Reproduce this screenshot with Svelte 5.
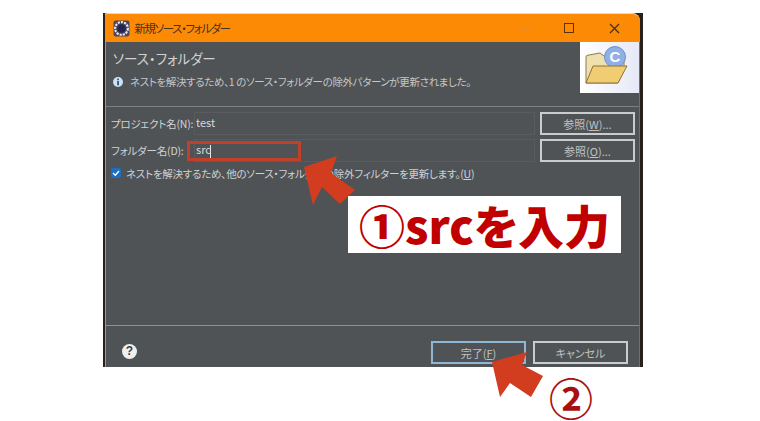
<script>
	const arrows = [
		'304,167 337,156 331,173 355,190 340,204 322,187 313,205',
		'492,362 527,352 522,365 543,376 531,397 510,383 500,397'
	];
</script>

<div class="page">
	<div class="frame">
		<div class="dialog">
			<div class="titlebar">
				<svg class="app-icon" viewBox="0 0 16 16" width="17" height="17">
					<rect x="0.5" y="0.5" width="15" height="15" rx="2" fill="#4a4560" />
					<circle cx="8" cy="8" r="6" fill="none" stroke="#e8e6ee" stroke-width="2" stroke-dasharray="2 1" />
					<circle cx="8" cy="8" r="4" fill="#23264a" />
				</svg>
				<span class="title">新規ソース・フォルダー</span>
				<div class="controls">
					<span class="min"></span>
					<span class="max"></span>
					<svg viewBox="0 0 11 11" width="11" height="11">
						<path d="M1 1 L10 10 M10 1 L1 10" stroke="#4a2c10" stroke-width="1.2" />
					</svg>
				</div>
			</div>

			<div class="header">
				<div class="header-text">
					<h2>ソース・フォルダー</h2>
					<p class="message">
						<svg viewBox="0 0 10 10" width="10" height="10">
							<circle cx="5" cy="5" r="5" fill="#cfe0f2" />
							<rect x="4.2" y="1.6" width="1.7" height="1.5" fill="#1d4f8c" />
							<rect x="4.2" y="3.9" width="1.7" height="4.4" fill="#1d4f8c" />
						</svg>
						<span>ネストを解決するため、1 のソース・フォルダーの除外パターンが更新されました。</span>
					</p>
				</div>
				<div class="banner">
					<svg viewBox="0 0 59 51" width="59" height="51">
						<path d="M6 41 L6 15 Q6 13 9 13 L20 11 L24 14 L44 14 L44 26 L38 41 Z" fill="#efe0b0" stroke="#8d7a48" />
						<circle cx="35" cy="15" r="10.5" fill="#8fb0e6" stroke="#6f8fcf" />
						<text x="35" y="20" class="banner-c">C</text>
						<path d="M6 41 L13 24 L47 24 L38 41 Z" fill="#f0cd72" stroke="#8d7238" />
					</svg>
				</div>
			</div>

			<div class="form">
				<label for="project">プロジェクト名(N):</label>
				<input id="project" value="test" readonly />
				<button>参照(<u>W</u>)...</button>
				<label for="folder">フォルダー名(D):</label>
				<input id="folder" value="src" readonly />
				<button>参照(<u>O</u>)...</button>
			</div>

			<div class="check">
				<span class="box">
					<svg viewBox="0 0 10 10" width="10" height="10">
						<path d="M2 5 L4.3 7.2 L8 3" fill="none" stroke="#fff" stroke-width="1.3" />
					</svg>
				</span>
				<span>ネストを解決するため、他のソース・フォルダーの除外フィルターを更新します。(<u>U</u>)</span>
			</div>

			<div class="spacer"></div>

			<div class="footer">
				<span class="help">?</span>
				<button class="primary">完了(<u>F</u>)</button>
				<button>キャンセル</button>
			</div>
		</div>
	</div>

	<!-- annotations drawn on top of the screenshot -->
	<div class="redbox"></div>
	<span class="caret"></span>
	<div class="callout">①srcを入力</div>
	<div class="step">②</div>
	<svg class="arrows" viewBox="0 0 760 421" width="760" height="421">
		{#each arrows as points}
			<polygon {points} fill="#d23c1f" />
		{/each}
	</svg>
</div>

<style>
	:global(body) {
		background: #fff;
	}
	.page {
		position: relative;
		width: 760px;
		height: 421px;
		overflow: hidden;
		padding: 13px 0 0 103px;
		box-sizing: border-box;
		background: #fff;
		font-family: 'Noto Sans CJK JP', 'Noto Sans', sans-serif;
		font-feature-settings: 'palt';
		font-size: 11px;
		color: #d6d8d8;
	}
	.frame {
		width: 540px;
		height: 354px;
		box-sizing: border-box;
		padding: 0 3px 0 2px;
		background: #26211d;
	}
	.dialog {
		display: flex;
		flex-direction: column;
		height: 100%;
		box-sizing: border-box;
		background: #4f5356;
		border-left: 1.5px solid #c98f4a;
		border-right: 1px solid #8a6a45;
		border-radius: 0 8px 0 0;
	}
	.titlebar {
		display: flex;
		align-items: center;
		height: 29px;
		flex-shrink: 0;
		margin: 0 -1px 0 -1.5px;
		padding: 0 20px 0 8px;
		background: #fc8a05;
		color: #46331f;
		border-radius: 3px 8px 0 0;
		border-top: 1px solid #f6d9a8;
		box-sizing: border-box;
	}
	.app-icon {
		margin-right: 5px;
	}
	.title {
		font-size: 11.5px;
		letter-spacing: -1.4px;
	}
	.controls {
		display: flex;
		align-items: center;
		gap: 35px;
		margin-left: auto;
	}
	.min {
		width: 9px;
		height: 1px;
		background: #e89030;
	}
	.max {
		width: 10px;
		height: 10px;
		border: 1px solid #5c3208;
		box-sizing: border-box;
	}
	.header {
		display: flex;
		justify-content: space-between;
		height: 65px;
		flex-shrink: 0;
		border-bottom: 1px solid #7d8183;
		box-sizing: border-box;
	}
	.header-text {
		padding: 7px 0 0 7px;
	}
	h2 {
		margin: 0;
		font-size: 13.5px;
		font-weight: 400;
		line-height: 18px;
		color: #d0d2d2;
	}
	.message {
		display: flex;
		align-items: center;
		gap: 7px;
		margin: 8px 0 0 0;
		font-size: 10.5px;
		letter-spacing: -0.37px;
		line-height: 14px;
		color: #c4c7c8;
		white-space: nowrap;
	}
	.banner {
		width: 59px;
		height: 51px;
		background: linear-gradient(90deg, #fff, #e6e9f6);
	}
	.banner svg {
		display: block;
	}
	.banner-c {
		font-family: 'Liberation Sans', sans-serif;
		font-size: 15px;
		font-weight: 700;
		fill: #fff;
		text-anchor: middle;
	}
	.form {
		display: grid;
		grid-template-columns: 76px 1fr 95px;
		grid-template-rows: 23px 23px;
		gap: 4px 5px;
		align-items: center;
		margin-top: 5px;
		padding: 0 4px 0 4px;
	}
	label {
		margin-left: 1px;
		font-size: 10.5px;
		letter-spacing: -0.2px;
		white-space: nowrap;
		color: #cfd2d2;
	}
	input {
		min-width: 0;
		height: 100%;
		box-sizing: border-box;
		margin-left: 3px;
		padding: 0 1px 3px;
		background: transparent;
		border: 1px solid #585c5f;
		color: #d6d8d8;
		font: inherit;
		font-size: 11px;
		outline: none;
	}
	button {
		height: 23px;
		padding: 0;
		box-sizing: border-box;
		background: #4f5356;
		border: 2px solid #c9cccd;
		color: #bfc2c3;
		font: inherit;
		font-size: 11px;
	}
	.check {
		display: flex;
		align-items: center;
		gap: 5px;
		margin-top: 2px;
		padding-left: 5px;
		height: 18px;
		font-size: 10.5px;
		letter-spacing: -0.25px;
		white-space: nowrap;
		color: #cfd2d2;
	}
	.box {
		display: flex;
		align-items: center;
		justify-content: center;
		width: 10px;
		height: 10px;
		background: #1a6fc4;
		border-radius: 2px;
	}
	.spacer {
		flex: 1;
		border-bottom: 1px solid #8d9091;
	}
	.footer {
		display: flex;
		align-items: flex-end;
		gap: 7px;
		height: 41px;
		flex-shrink: 0;
		padding: 0 11px 3px 16px;
		box-sizing: border-box;
	}
	.footer button {
		width: 95px;
	}
	.help {
		width: 15px;
		height: 15px;
		margin: 0 auto 5px 0;
		border-radius: 50%;
		background: #eef0f0;
		color: #3c4042;
		font-family: 'Liberation Sans', sans-serif;
		font-size: 12px;
		font-weight: 700;
		line-height: 15px;
		text-align: center;
	}
	.primary {
		border-color: #8fb6d3;
	}
	.redbox {
		position: absolute;
		left: 187px;
		top: 141px;
		width: 114px;
		height: 20px;
		box-sizing: border-box;
		border: 3px solid #c2402a;
	}
	.caret {
		position: absolute;
		left: 210px;
		top: 145px;
		width: 1px;
		height: 13px;
		background: #e6e6e6;
	}
	.callout {
		position: absolute;
		left: 348px;
		top: 196px;
		width: 273px;
		height: 57px;
		background: #fff;
		color: #c00000;
		font-size: 46px;
		font-weight: 900;
		line-height: 57px;
		text-align: center;
		white-space: nowrap;
	}
	.step {
		position: absolute;
		left: 549px;
		top: 375px;
		color: #a81010;
		font-size: 44px;
		font-weight: 700;
		line-height: 44px;
	}
	.arrows {
		position: absolute;
		left: 0;
		top: 0;
	}
</style>
